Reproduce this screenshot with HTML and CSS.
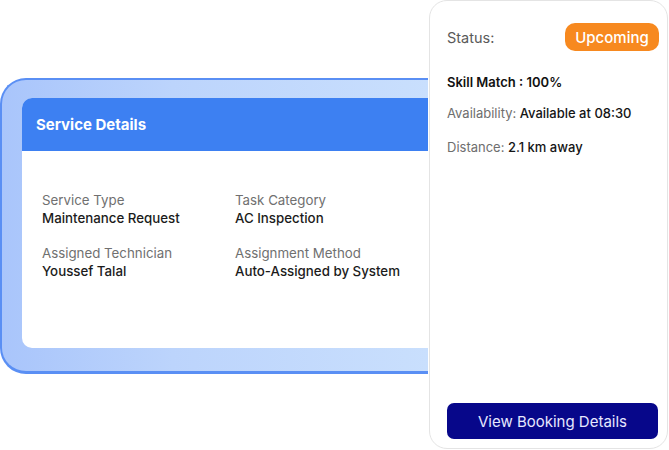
FILE: index.html
```html
<!DOCTYPE html>
<html lang="en">
<head>
    <meta charset="UTF-8">
    <meta name="viewport" content="width=device-width, initial-scale=1.0">
    <title>Service Details</title>
    <link rel="stylesheet" href="styles.css">
</head>
<body>
    <div class="stage">
        <div class="frame">
            <div class="details">
                <div class="details-head">Service Details</div>
                <div class="details-body">
                    <div class="field">
                        <div class="label">Service Type</div>
                        <div class="value">Maintenance Request</div>
                    </div>
                    <div class="field">
                        <div class="label">Task Category</div>
                        <div class="value">AC Inspection</div>
                    </div>
                    <div class="field">
                        <div class="label">Assigned Technician</div>
                        <div class="value">Youssef Talal</div>
                    </div>
                    <div class="field">
                        <div class="label">Assignment Method</div>
                        <div class="value">Auto-Assigned by System</div>
                    </div>
                </div>
            </div>
        </div>

        <div class="side-card">
            <div class="status-row">
                <span class="status-label">Status:</span>
                <span class="badge">Upcoming</span>
            </div>
            <div class="skill">Skill Match : 100%</div>
            <div class="info"><span class="muted">Availability:</span> Available at 08:30</div>
            <div class="info"><span class="muted">Distance:</span> 2.1 km away</div>
            <button class="book-btn">View Booking Details</button>
        </div>
    </div>
</body>
</html>
```

FILE: styles.css
```css
body {
    margin: 0;
    background-color: white;
    font-family: Inter, "Noto Sans", Arial, sans-serif;
}
.stage {
    display: flex;
    align-items: flex-start;
    width: 669px;
    height: 450px;
}
.frame {
    width: 406px;
    margin-top: 78px;
    padding: 18px 0 23px 20px;
    border: 2px solid #5a8ff4;
    border-right: none;
    border-bottom-width: 3px;
    border-radius: 26px 0 0 26px;
    background: linear-gradient(90deg, #a9c5fb 0%, #bcd4fc 40%, #c9dffd 100%);
    flex-shrink: 0;
}
.details {
    background-color: white;
    border-radius: 10px 0 0 10px;
    overflow: hidden;
}
.details-head {
    height: 53px;
    display: flex;
    align-items: center;
    padding-left: 14px;
    background-color: #3d80f2;
    color: white;
    font-size: 15px;
    font-weight: 700;
}
.details-body {
    height: 197px;
    box-sizing: border-box;
    padding: 40px 0 0 20px;
    display: grid;
    grid-template-columns: 193px 1fr;
    grid-auto-rows: min-content;
    row-gap: 17px;
}
.label {
    font-size: 13.3px;
    color: #707070;
    line-height: 18px;
}
.value {
    font-size: 13.3px;
    color: #1b1b1b;
    font-weight: 500;
    line-height: 18px;
}
.side-card {
    width: 239px;
    height: 449px;
    margin-left: 1px;
    box-sizing: border-box;
    padding: 22px 10px 8px 17px;
    background-color: white;
    border: 1px solid #e4e4e4;
    border-radius: 18px;
    display: flex;
    flex-direction: column;
    flex-shrink: 0;
}
.status-row {
    display: flex;
    justify-content: space-between;
    align-items: center;
}
.status-label {
    font-size: 14.5px;
    color: #5a5a5a;
}
.badge {
    width: 94px;
    height: 28px;
    box-sizing: border-box;
    display: flex;
    align-items: center;
    justify-content: center;
    background-color: #f7891f;
    color: white;
    font-size: 15px;
    font-weight: 500;
    border-radius: 10px;
    margin-right: -2px;
}
.skill {
    margin-top: 23px;
    font-size: 13px;
    font-weight: 600;
    color: #111;
}
.info {
    margin-top: 15px;
    font-size: 13px;
    font-weight: 500;
    color: #151515;
}
.info + .info {
    margin-top: 18px;
}
.muted {
    color: #6e6e6e;
    font-weight: 400;
}
.book-btn {
    margin-bottom: 1px;
    margin-top: auto;
    width: 211px;
    height: 36px;
    border: none;
    border-radius: 7px;
    background-color: #07078a;
    color: #e6e8ff;
    font-family: inherit;
    font-size: 15px;
    cursor: pointer;
}
```
